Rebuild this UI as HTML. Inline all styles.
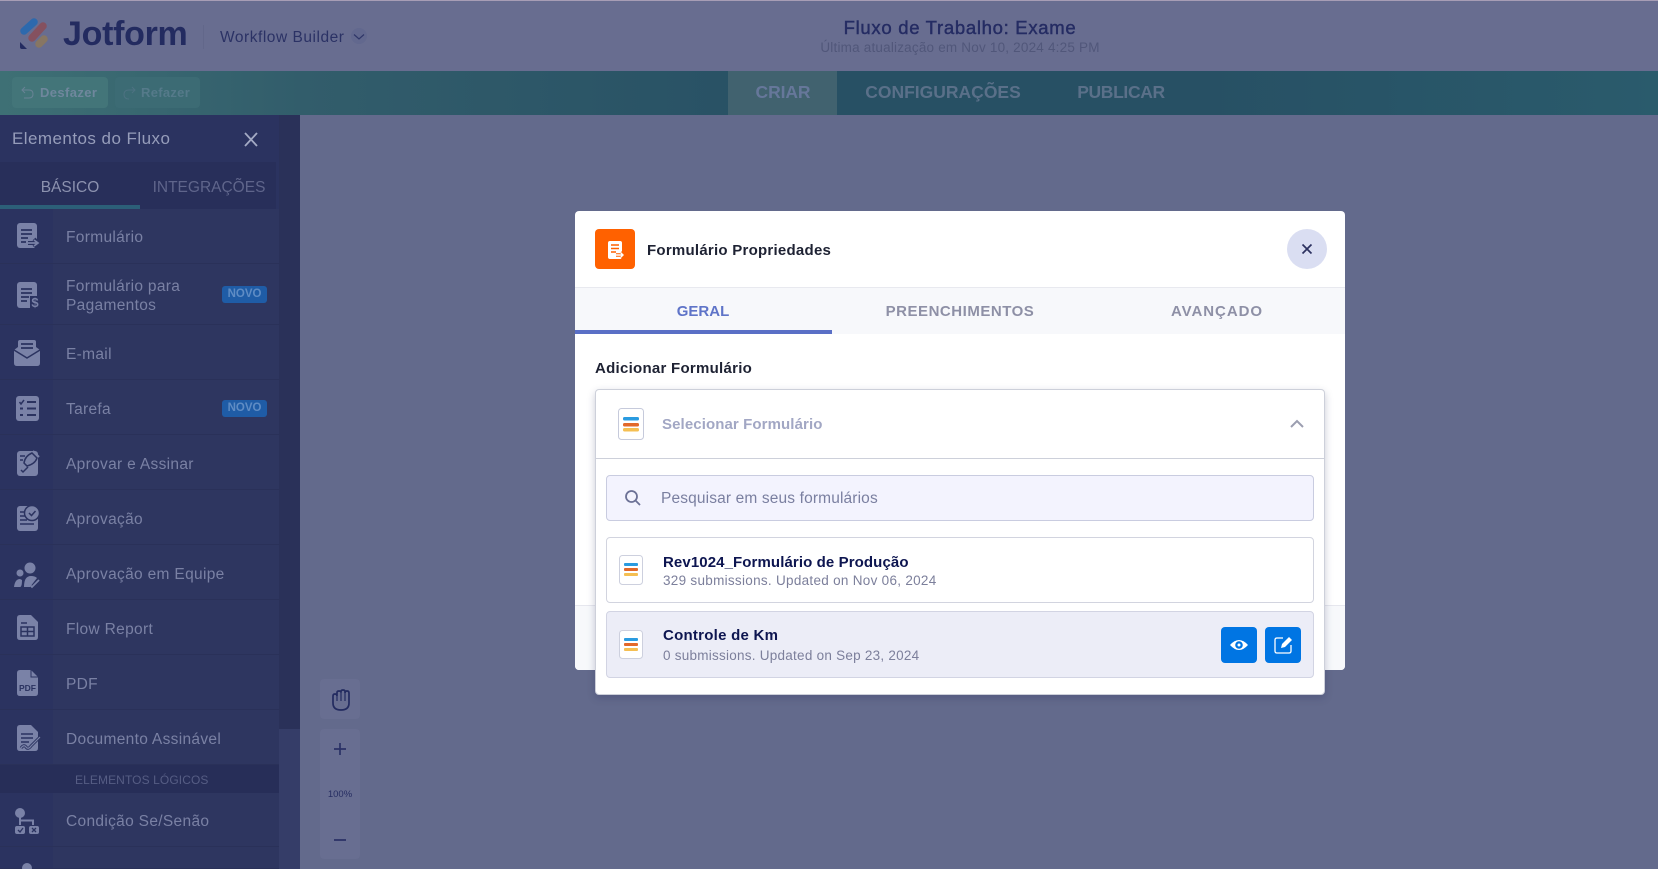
<!DOCTYPE html>
<html lang="pt">
<head>
<meta charset="utf-8">
<title>Jotform Workflow Builder</title>
<style>
html,body{margin:0;padding:0;width:1658px;height:869px;overflow:hidden;background:#636a8c;font-family:"Liberation Sans",sans-serif}
div,span{position:absolute;box-sizing:border-box}
.t{white-space:nowrap;line-height:20px}
.c{transform:translateX(-50%)}
.row{left:0;width:279px;background:#2e3660;border-bottom:1px solid #2a3159}
.ic{left:0;top:0;bottom:0;width:53px;background:#2b3360}
.n{left:66px;font-size:15.5px;color:#7a81a4;letter-spacing:.32px}
.nv{left:222px;width:45px;height:17px;background:#1f5ca6;border-radius:3px;color:#5f8cc4;font-size:11.5px;font-weight:700;text-align:center;line-height:17px}
.box{background:#fff}
svg{position:absolute;overflow:visible}
</style>
</head>
<body>
<!-- top header -->
<div style="left:0;top:0;width:1658px;height:71px;background:#686d90"></div>
<div style="left:0;top:0;width:1658px;height:1px;background:#a79db5"></div>
<span class="t" style="left:63px;top:14px;line-height:40px;font-size:34px;font-weight:700;color:#232b60;letter-spacing:-.3px">Jotform</span>
<div style="left:203px;top:25px;width:1px;height:24px;background:#62678a"></div>
<span class="t" style="left:220px;top:28px;font-size:15.5px;color:#2b3265;letter-spacing:.53px">Workflow Builder</span>
<div style="left:351px;top:28px;width:16px;height:16px;border-radius:50%;background:#62688e"></div>
<span class="t c" style="left:960px;top:18px;font-size:18.5px;font-weight:400;color:#252c63;-webkit-text-stroke:.45px #252c63;letter-spacing:.7px">Fluxo de Trabalho: Exame</span>
<span class="t c" style="left:960px;top:38px;font-size:13.5px;color:#51577a;letter-spacing:.2px">Última atualização em Nov 10, 2024 4:25 PM</span>

<!-- toolbar -->
<div style="left:0;top:71px;width:1658px;height:44px;background:linear-gradient(90deg,#3e7075 0,#325d6b 300px,#275064 800px,#275064 1200px,#2a5b6c 1658px)"></div>
<div style="left:12px;top:77px;width:96px;height:31px;background:#437579;border-radius:4px"></div>
<div style="left:115px;top:77px;width:85px;height:31px;background:#3c6b74;border-radius:4px"></div>
<span class="t" style="left:40px;top:83px;font-size:13px;font-weight:700;color:#6f879d;letter-spacing:.4px">Desfazer</span>
<span class="t" style="left:141px;top:83px;font-size:13px;font-weight:700;color:#557a8a;letter-spacing:.3px">Refazer</span>
<div style="left:728px;top:71px;width:109px;height:44px;background:#41626f"></div>
<span class="t c" style="left:783px;top:82px;font-size:17.5px;font-weight:700;color:#66779a;letter-spacing:-.1px">CRIAR</span>
<span class="t c" style="left:943px;top:82px;font-size:17.5px;font-weight:700;color:#5a7089">CONFIGURAÇÕES</span>
<span class="t c" style="left:1121px;top:82px;font-size:17.5px;font-weight:700;color:#5a7089;letter-spacing:-.35px">PUBLICAR</span>

<!-- sidebar -->
<div style="left:0;top:115px;width:300px;height:754px;background:#2b3360"></div>
<div style="left:279px;top:115px;width:21px;height:614px;background:#2a3159"></div>
<div style="left:279px;top:729px;width:21px;height:140px;background:#353d68"></div>
<span class="t" style="left:12px;top:129px;font-size:17px;color:#969dba;letter-spacing:.45px">Elementos do Fluxo</span>
<div style="left:0;top:162px;width:276px;height:47px;background:#282f5a"></div>
<div style="left:0;top:205px;width:140px;height:4px;background:#2c5f78"></div>
<span class="t c" style="left:70px;top:178px;font-size:15.5px;color:#8c92af">BÁSICO</span>
<span class="t c" style="left:209px;top:178px;font-size:15.5px;color:#5f658b">INTEGRAÇÕES</span>

<div class="row" style="top:209px;height:55px"><div class="ic"></div></div>
<div class="row" style="top:264px;height:61px"><div class="ic"></div></div>
<div class="row" style="top:325px;height:55px"><div class="ic"></div></div>
<div class="row" style="top:380px;height:55px"><div class="ic"></div></div>
<div class="row" style="top:435px;height:55px"><div class="ic"></div></div>
<div class="row" style="top:490px;height:55px"><div class="ic"></div></div>
<div class="row" style="top:545px;height:55px"><div class="ic"></div></div>
<div class="row" style="top:600px;height:55px"><div class="ic"></div></div>
<div class="row" style="top:655px;height:55px"><div class="ic"></div></div>
<div class="row" style="top:710px;height:55px"><div class="ic"></div></div>
<div style="left:0;top:765px;width:279px;height:28px;background:#272e58"></div>
<div class="row" style="top:793px;height:54px"><div class="ic"></div></div>
<div class="row" style="top:847px;height:22px"><div class="ic"></div></div>

<span class="t n" style="top:228px">Formulário</span>
<span class="t n" style="top:277px">Formulário para</span>
<span class="t n" style="top:296px">Pagamentos</span>
<span class="t n" style="top:345px">E-mail</span>
<span class="t n" style="top:400px">Tarefa</span>
<span class="t n" style="top:455px">Aprovar e Assinar</span>
<span class="t n" style="top:510px">Aprovação</span>
<span class="t n" style="top:565px">Aprovação em Equipe</span>
<span class="t n" style="top:620px">Flow Report</span>
<span class="t n" style="top:675px">PDF</span>
<span class="t n" style="top:730px">Documento Assinável</span>
<span class="t" style="left:75px;top:770px;font-size:12px;color:#565d84;letter-spacing:.1px">ELEMENTOS LÓGICOS</span>
<span class="t n" style="top:812px">Condição Se/Senão</span>
<div class="nv" style="top:286px">NOVO</div>
<div class="nv" style="top:400px">NOVO</div>

<!-- zoom controls -->
<div style="left:320px;top:679px;width:40px;height:40px;border-radius:4px;background:#686e91"></div>
<div style="left:320px;top:729px;width:40px;height:130px;border-radius:4px;background:#686e91"></div>
<span class="t c" style="left:340px;top:785px;font-size:9.5px;color:#262d62">100%</span>

<!-- icons over the dimmed page -->
<svg width="1658" height="869" style="left:0;top:0">
  <!-- logo -->
  <g stroke-linecap="round" fill="none" stroke-width="7.5">
    <path d="M24 31 34 22" stroke="#2d69ad"/>
    <path d="M32 38 43 26" stroke="#85515f"/>
    <path d="M39 44 44 39" stroke="#877663"/>
  </g>
  <path d="M20 42 27 49H22Q20 49 20 47Z" fill="#232b60"/>
  <path d="M354 34.5 359 39 364 34.5" fill="none" stroke="#2f3668" stroke-width="1.2"/>
  <!-- undo/redo -->
  <path d="M25 87 22 90 25 93M22 90H29Q33 90 33 94T29 98H24" fill="none" stroke="#688395" stroke-width="1"/>
  <path d="M132 87 135 90 132 93M135 90H129Q124 90 124 94.500T129 99" fill="none" stroke="#4d7282" stroke-width="1"/>
  <!-- sidebar close -->
  <path d="M245 133 257 146M257 133 245 146" stroke="#a3aac4" stroke-width="1.8" fill="none"/>

  <g fill="#7a82a7">
    <!-- form -->
    <rect x="17" y="223" width="20" height="25" rx="3"/>
    <path d="M21 230H32M21 234H32M21 238H28M21 242H26" stroke="#2b3360" stroke-width="1.7"/>
    <path d="M28 243H38M34 239 38 243 34 247" fill="none" stroke="#2b3360" stroke-width="4"/>
    <path d="M28 243H38M34 240 38 243 34 246" fill="none" stroke="#7a82a7" stroke-width="1.7"/>
    <!-- payment -->
    <rect x="17" y="282" width="20" height="26" rx="3"/>
    <path d="M21 289H32M21 293H32M21 297H29M21 301H27" stroke="#2b3360" stroke-width="1.7"/>
    <rect x="30" y="296" width="9" height="14" fill="#2b3360"/>
    <text x="35" y="307" font-family="Liberation Sans,sans-serif" font-size="13" font-weight="700" text-anchor="middle">$</text>
    <!-- email -->
    <path d="M20 340H34Q36 340 36 342V347L40 350V363Q40 366 37 366H17Q14 366 14 363V350L18 347V342Q18 340 20 340Z"/>
    <path d="M21 344H33M21 348H33" stroke="#2b3360" stroke-width="1.8"/>
    <path d="M14 350 27 358 40 350" stroke="#2b3360" stroke-width="1.5" fill="none"/>
    <!-- task -->
    <rect x="16" y="396" width="23" height="25" rx="3"/>
    <path d="M27 402H36M27 408.500H36M27 415H36M20 408.500H23M20 415H23" stroke="#2b3360" stroke-width="2"/>
    <path d="M19.500 402 21 404 24 400" stroke="#2b3360" stroke-width="1.500" fill="none"/>
    <!-- approve and sign -->
    <rect x="17" y="451" width="21" height="25" rx="3"/>
    <path d="M24 463Q25 456 32 453L37 458Q35 464 27 466Z" stroke="#2b3360" stroke-width="1.500"/>
    <path d="M33 451 39 457" stroke="#7a82a7" stroke-width="2"/>
    <path d="M21 470 23 472 28 467M20 460H23M20 456H25" stroke="#2b3360" stroke-width="1.500" fill="none"/>
    <!-- approval -->
    <rect x="17" y="506" width="21" height="25" rx="3"/>
    <path d="M20 512H25M20 516H25M20 520H27M20 524H34" stroke="#2b3360" stroke-width="1.600"/>
    <circle cx="32" cy="513" r="7.500" stroke="#2b3360" stroke-width="1.500"/>
    <path d="M29 513 31.500 515.500 35.500 511" stroke="#2b3360" stroke-width="1.500" fill="none"/>
    <!-- team -->
    <circle cx="30" cy="568" r="5.500"/>
    <circle cx="20" cy="573" r="3.500"/>
    <path d="M14 587Q15 579 20 579L22 580Q22 587 20 587ZM24 587Q24 576 31 576Q35 576 37 578L30 587Z"/>
    <path d="M29 584 32 587 39 580" stroke="#7a82a7" stroke-width="1.800" fill="none"/>
    <!-- report -->
    <path d="M20 615H31L38 622V637Q38 640 35 640H20Q17 640 17 637V618Q17 615 20 615Z"/>
    <path d="M21 623H27" stroke="#2b3360" stroke-width="1.500"/>
    <path d="M21 627H34V636H21ZM27.500 627V636M21 631.500H34" fill="none" stroke="#2b3360" stroke-width="1.500"/>
    <!-- pdf -->
    <path d="M20 670H31L38 677V693Q38 696 35 696H20Q17 696 17 693V673Q17 670 20 670Z"/>
    <path d="M31 670V677H38" fill="none" stroke="#2b3360" stroke-width="1"/>
    <text x="27.500" y="691" font-family="Liberation Sans,sans-serif" font-size="8.500" font-weight="700" text-anchor="middle" fill="#2b3360">PDF</text>
    <!-- doc -->
    <path d="M20 725H31L38 732V748Q38 751 35 751H20Q17 751 17 748V728Q17 725 20 725Z"/>
    <path d="M21 734H33M21 738H33M21 742H29" stroke="#2b3360" stroke-width="1.600"/>
    <path d="M21 748Q24 744 26 747T31 746L40 737" stroke="#2b3360" stroke-width="3" fill="none"/>
    <path d="M21 748Q24 744 26 747T31 746L40 737" stroke="#7a82a7" stroke-width="1.200" fill="none"/>
    <!-- condition -->
    <circle cx="20" cy="813" r="5"/>
    <path d="M20 815V825M20 820.500H33V825" stroke="#7a82a7" stroke-width="2" fill="none"/>
    <rect x="15" y="826" width="10" height="8" rx="2"/>
    <rect x="29" y="826" width="10" height="8" rx="2"/>
    <path d="M18 830 20 832 23 828M32 828 36 832M36 828 32 832" stroke="#2b3360" stroke-width="1.300" fill="none"/>
    <!-- next row -->
    <circle cx="27" cy="868" r="5"/>
  </g>
  <!-- hand -->
  <path d="M333 703V696Q333 694 335 694T337 696V692.500Q337 691 339 691T341 692.500V691.500Q341 690 343 690T345 691.500V693Q345 691 347 691T349 693V703Q349 710 341 710T333 703Z" fill="none" stroke="#232b60" stroke-width="1.700"/>
  <path d="M337 696V701M341 692V701M345 693V701" stroke="#232b60" stroke-width="1.200"/>
  <path d="M334 749H346M340 743V755M334 840H346" stroke="#2a3166" stroke-width="1.700" fill="none"/>
</svg>

<!-- modal -->
<div class="box" style="left:575px;top:211px;width:770px;height:459px;border-radius:4px;overflow:hidden">
  <div style="left:0;top:76px;width:770px;height:1px;background:#e8e9ef"></div>
  <div style="left:0;top:77px;width:770px;height:46px;background:#f7f8fb"></div>
  <div style="left:0;top:119px;width:257px;height:4px;background:#5a6fc6"></div>
  <div style="left:0;top:394px;width:770px;height:65px;background:#f7f8fb;border-top:1px solid #e6e7ee"></div>
</div>
<div style="left:595px;top:229px;width:40px;height:40px;background:#ff6100;border-radius:4px"></div>
<svg width="40" height="40" style="left:595px;top:229px">
  <rect x="13" y="12" width="14" height="18" rx="2" fill="#fff"/>
  <path d="M16 16H24M16 19.500H24M16 23H21" stroke="#ff6100" stroke-width="1.400"/>
  <path d="M21 26H28M25.500 23.500 28 26 25.500 28.500" fill="none" stroke="#ff6100" stroke-width="3.500"/>
  <path d="M21 26H28M25.500 23.500 28 26 25.500 28.500" fill="none" stroke="#fff" stroke-width="1.400"/>
</svg>
<span class="t" style="left:647px;top:241px;font-size:15px;font-weight:700;color:#1e2233;letter-spacing:.25px">Formulário Propriedades</span>
<div style="left:1287px;top:229px;width:40px;height:40px;border-radius:50%;background:#dadef2"></div>
<svg width="40" height="40" style="left:1287px;top:229px"><path d="M15.500 15.500 24.500 24.500M24.500 15.500 15.500 24.500" stroke="#2c3160" stroke-width="1.700"/></svg>
<span class="t c" style="left:703px;top:302px;font-size:15px;font-weight:700;color:#5f74c8">GERAL</span>
<span class="t c" style="left:960px;top:302px;font-size:15px;font-weight:700;color:#8e90a6;letter-spacing:.52px">PREENCHIMENTOS</span>
<span class="t c" style="left:1217px;top:302px;font-size:15px;font-weight:700;color:#8e90a6;letter-spacing:.95px">AVANÇADO</span>
<span class="t" style="left:595px;top:359px;font-size:15px;font-weight:700;color:#1e2233;letter-spacing:.27px">Adicionar Formulário</span>

<!-- dropdown -->
<div style="left:595px;top:389px;width:730px;height:306px;background:#fff;border:1px solid #cdd0da;border-radius:4px;box-shadow:0 3px 8px rgba(40,45,90,.25)"></div>
<div style="left:596px;top:458px;width:728px;height:1px;background:#cdd0da"></div>
<svg width="26" height="32" style="left:618px;top:408px">
  <rect x=".5" y=".5" width="25" height="31" rx="3" fill="#fff" stroke="#c6cadb"/>
  <rect x="5" y="9" width="16" height="3.500" rx="1.500" fill="#2a9be0"/>
  <rect x="5" y="15" width="16" height="3.500" rx="1.500" fill="#e2682a"/>
  <rect x="5" y="20" width="16" height="3.500" rx="1.500" fill="#f5bf52"/>
</svg>
<span class="t" style="left:662px;top:415px;font-size:15px;font-weight:700;color:#a2a7c4;letter-spacing:.1px">Selecionar Formulário</span>
<svg width="16" height="10" style="left:1289px;top:419px"><path d="M2 8 8 2 14 8" fill="none" stroke="#9b9eb0" stroke-width="2"/></svg>

<div style="left:606px;top:475px;width:708px;height:46px;background:#f3f3fe;border:1px solid #c9cce0;border-radius:4px"></div>
<svg width="18" height="18" style="left:624px;top:489px"><circle cx="7.500" cy="7.500" r="5.500" fill="none" stroke="#6c7196" stroke-width="1.800"/><path d="M11.500 11.500 16 16" stroke="#6c7196" stroke-width="1.800"/></svg>
<span class="t" style="left:661px;top:489px;font-size:15.5px;color:#7a7fa0;letter-spacing:.14px">Pesquisar em seus formulários</span>

<div style="left:606px;top:537px;width:708px;height:66px;background:#fff;border:1px solid #d2d4df;border-radius:4px"></div>
<svg width="24" height="30" style="left:619px;top:555px">
  <rect x=".5" y=".5" width="23" height="29" rx="3" fill="#fff" stroke="#cdd0de"/>
  <rect x="5" y="8" width="14" height="3" rx="1" fill="#2a9be0"/>
  <rect x="5" y="13" width="14" height="3" rx="1" fill="#e2682a"/>
  <rect x="5" y="18" width="14" height="3" rx="1" fill="#f5bf52"/>
</svg>
<span class="t" style="left:663px;top:553px;font-size:15px;font-weight:700;color:#0d1550;letter-spacing:.1px">Rev1024_Formulário de Produção</span>
<span class="t" style="left:663px;top:571px;font-size:13.500px;color:#7c7f9b;letter-spacing:.29px">329 submissions. Updated on Nov 06, 2024</span>

<div style="left:606px;top:611px;width:708px;height:67px;background:#ecedf7;border:1px solid #d2d4e3;border-radius:4px"></div>
<svg width="24" height="30" style="left:619px;top:630px">
  <rect x=".5" y=".5" width="23" height="28" rx="3" fill="#fff" stroke="#cdd0de"/>
  <rect x="5" y="8" width="14" height="3" rx="1" fill="#2a9be0"/>
  <rect x="5" y="13" width="14" height="3" rx="1" fill="#e2682a"/>
  <rect x="5" y="18" width="14" height="3" rx="1" fill="#f5bf52"/>
</svg>
<span class="t" style="left:663px;top:626px;font-size:15px;font-weight:700;color:#0d1550;letter-spacing:.25px">Controle de Km</span>
<span class="t" style="left:663px;top:646px;font-size:13.500px;color:#7c7f9b;letter-spacing:.25px">0 submissions. Updated on Sep 23, 2024</span>
<div style="left:1221px;top:627px;width:36px;height:36px;background:#0075e3;border-radius:4px"></div>
<div style="left:1265px;top:627px;width:36px;height:36px;background:#0075e3;border-radius:4px"></div>
<svg width="36" height="36" style="left:1221px;top:627px"><path d="M9 18Q18 8 27 18 18 28 9 18Z" fill="#fff"/><circle cx="18" cy="18" r="3.800" fill="#0075e3"/><circle cx="18" cy="18" r="1.500" fill="#fff"/></svg>
<svg width="36" height="36" style="left:1265px;top:627px"><path d="M18 11H12Q10 11 10 13V24Q10 26 12 26H24Q26 26 26 24V18" fill="none" stroke="#fff" stroke-width="1.300"/><path d="M16 21 17 17 24 10 27 13 20 20Z" fill="#fff"/></svg>
</body>
</html>
